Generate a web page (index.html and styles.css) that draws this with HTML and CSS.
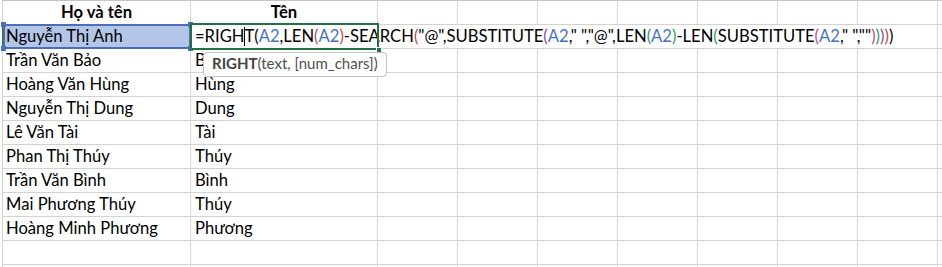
FILE: index.html
```html
<!DOCTYPE html>
<html lang="vi">
<head>
<meta charset="utf-8">
<title>Sheet</title>
<link rel="stylesheet" href="styles.css">
</head>
<body>
<div class="sheet">
  <div class="row head"><div class="c a">Họ và tên</div><div class="c b">Tên</div><div class="c"></div><div class="c"></div><div class="c"></div><div class="c"></div><div class="c"></div><div class="c"></div><div class="c"></div><div class="c"></div></div>
  <div class="row"><div class="c a ref">Nguyễn Thị Anh</div><div class="c b"></div><div class="c"></div><div class="c"></div><div class="c"></div><div class="c"></div><div class="c"></div><div class="c"></div><div class="c"></div><div class="c"></div></div>
  <div class="row"><div class="c a">Trần Văn Bảo</div><div class="c b">Bảo</div><div class="c"></div><div class="c"></div><div class="c"></div><div class="c"></div><div class="c"></div><div class="c"></div><div class="c"></div><div class="c"></div></div>
  <div class="row"><div class="c a">Hoàng Văn Hùng</div><div class="c b">Hùng</div><div class="c"></div><div class="c"></div><div class="c"></div><div class="c"></div><div class="c"></div><div class="c"></div><div class="c"></div><div class="c"></div></div>
  <div class="row"><div class="c a">Nguyễn Thị Dung</div><div class="c b">Dung</div><div class="c"></div><div class="c"></div><div class="c"></div><div class="c"></div><div class="c"></div><div class="c"></div><div class="c"></div><div class="c"></div></div>
  <div class="row"><div class="c a">Lê Văn Tài</div><div class="c b">Tài</div><div class="c"></div><div class="c"></div><div class="c"></div><div class="c"></div><div class="c"></div><div class="c"></div><div class="c"></div><div class="c"></div></div>
  <div class="row"><div class="c a">Phan Thị Thúy</div><div class="c b">Thúy</div><div class="c"></div><div class="c"></div><div class="c"></div><div class="c"></div><div class="c"></div><div class="c"></div><div class="c"></div><div class="c"></div></div>
  <div class="row"><div class="c a">Trần Văn Bình</div><div class="c b">Bình</div><div class="c"></div><div class="c"></div><div class="c"></div><div class="c"></div><div class="c"></div><div class="c"></div><div class="c"></div><div class="c"></div></div>
  <div class="row"><div class="c a">Mai Phương Thúy</div><div class="c b">Thúy</div><div class="c"></div><div class="c"></div><div class="c"></div><div class="c"></div><div class="c"></div><div class="c"></div><div class="c"></div><div class="c"></div></div>
  <div class="row"><div class="c a">Hoàng Minh Phương</div><div class="c b">Phương</div><div class="c"></div><div class="c"></div><div class="c"></div><div class="c"></div><div class="c"></div><div class="c"></div><div class="c"></div><div class="c"></div></div>
  <div class="row"><div class="c a"></div><div class="c b"></div><div class="c"></div><div class="c"></div><div class="c"></div><div class="c"></div><div class="c"></div><div class="c"></div><div class="c"></div><div class="c"></div></div>
  <div class="row last"><div class="c a"></div><div class="c b"></div><div class="c"></div><div class="c"></div><div class="c"></div><div class="c"></div><div class="c"></div><div class="c"></div><div class="c"></div><div class="c"></div></div>

  <div class="rowmark"></div>
  <div class="refbox"><span class="h tl"></span><span class="h tr"></span><span class="h bl"></span><span class="h br"></span></div>
  <div class="editor">=RIGH<span class="caret"></span>T(<span class="r">A2</span>,LEN<span class="p2">(</span><span class="r">A2</span><span class="p2">)</span>-SEARCH<span class="p2">(</span>"@",SUBSTITUTE<span class="p3">(</span><span class="r">A2</span>," ","@",LEN<span class="p4">(</span><span class="r">A2</span><span class="p4">)</span>-LEN<span class="p4">(</span>SUBSTITUTE<span class="p5">(</span><span class="r">A2</span>," ",""<span class="p5">)</span><span class="p4">)</span><span class="p3">)</span><span class="p2">)</span>)</div>
  <div class="active"><span class="fill"></span></div>
  <div class="tip"><b>RIGHT</b>(text, [num_chars])</div>
</div>
</body>
</html>
```
FILE: styles.css
```css
* { box-sizing: border-box; }
html, body { margin: 0; padding: 0; background: #fff; overflow: hidden; }
body { font-family: Lato, "Liberation Sans", sans-serif; color: #000; }

.sheet {
  position: relative;
  margin-left: 2px;
  border-left: 1px solid #d4d4d4;
  border-top: 1px solid #c4c4c4;
  width: max-content;
}
.row {
  display: grid;
  grid-template-columns: 188px 187px repeat(7, 80px) 40px;
  height: 24px;
}
.row.last { height: 3px; overflow: hidden; }
.c {
  border-right: 1px solid #d6d6d6;
  border-bottom: 1px solid #d2d2d2;
  padding: 0 4px;
  font-size: 16.6px;
  line-height: 23px;
  white-space: nowrap;
  overflow: hidden;
}
.row.last .c { border-bottom: 0; }
.c.a { padding-left: 3px; }
.head .c { font-weight: 700; text-align: center; padding: 0; }
.ref { background: #b4c6e7; }

/* row header highlight edge */
.rowmark {
  position: absolute;
  left: -1px; top: 22px;
  width: 2px; height: 26px;
  background: #217346;
}

/* blue range reference box */
.refbox {
  position: absolute;
  left: 0; top: 23px;
  width: 188px; height: 25px;
  border: 2px solid #4a6fba;
}
.h {
  position: absolute;
  width: 5px; height: 5px;
  background: #4a6fba;
}
.h.tl { left: -4px; top: -4px; }
.h.tr { right: -4px; top: -4px; }
.h.bl { left: -4px; bottom: -4px; }
.h.br { right: -4px; bottom: -4px; }

/* in-cell editor overflowing to the right */
.editor {
  position: absolute;
  left: 189px; top: 24px;
  width: 708px; height: 23px;
  background: #fff;
  padding-left: 3px;
  font-size: 16.6px;
  line-height: 23px;
  white-space: nowrap;
}
.caret {
  display: inline-block;
  width: 1px; height: 19px;
  margin-right: -1px;
  background: #000;
  vertical-align: -4px;
}
.r { color: #4472c4; }
.p2 { color: #c8473f; }
.p3 { color: #8a4a9e; }
.p4 { color: #2f9a5a; }
.p5 { color: #c2478f; }

/* active cell green border */
.active {
  position: absolute;
  left: 187px; top: 22px;
  width: 189px; height: 27px;
  border: 2px solid #217346;
}
.fill {
  position: absolute;
  right: -5px; bottom: -5px;
  width: 6px; height: 6px;
  background: #217346;
  border: 1px solid #fff;
}

/* function tooltip */
.tip {
  position: absolute;
  left: 200px; top: 51px;
  width: 184px; height: 25px;
  background: #fff;
  border: 1px solid #c3c3c3;
  border-radius: 4px;
  padding: 1px 0 0 8px;
  font-size: 15px;
  line-height: 18px;
  color: #505050;
  white-space: nowrap;
}
.tip b { font-weight: 700; color: #444; }
```
